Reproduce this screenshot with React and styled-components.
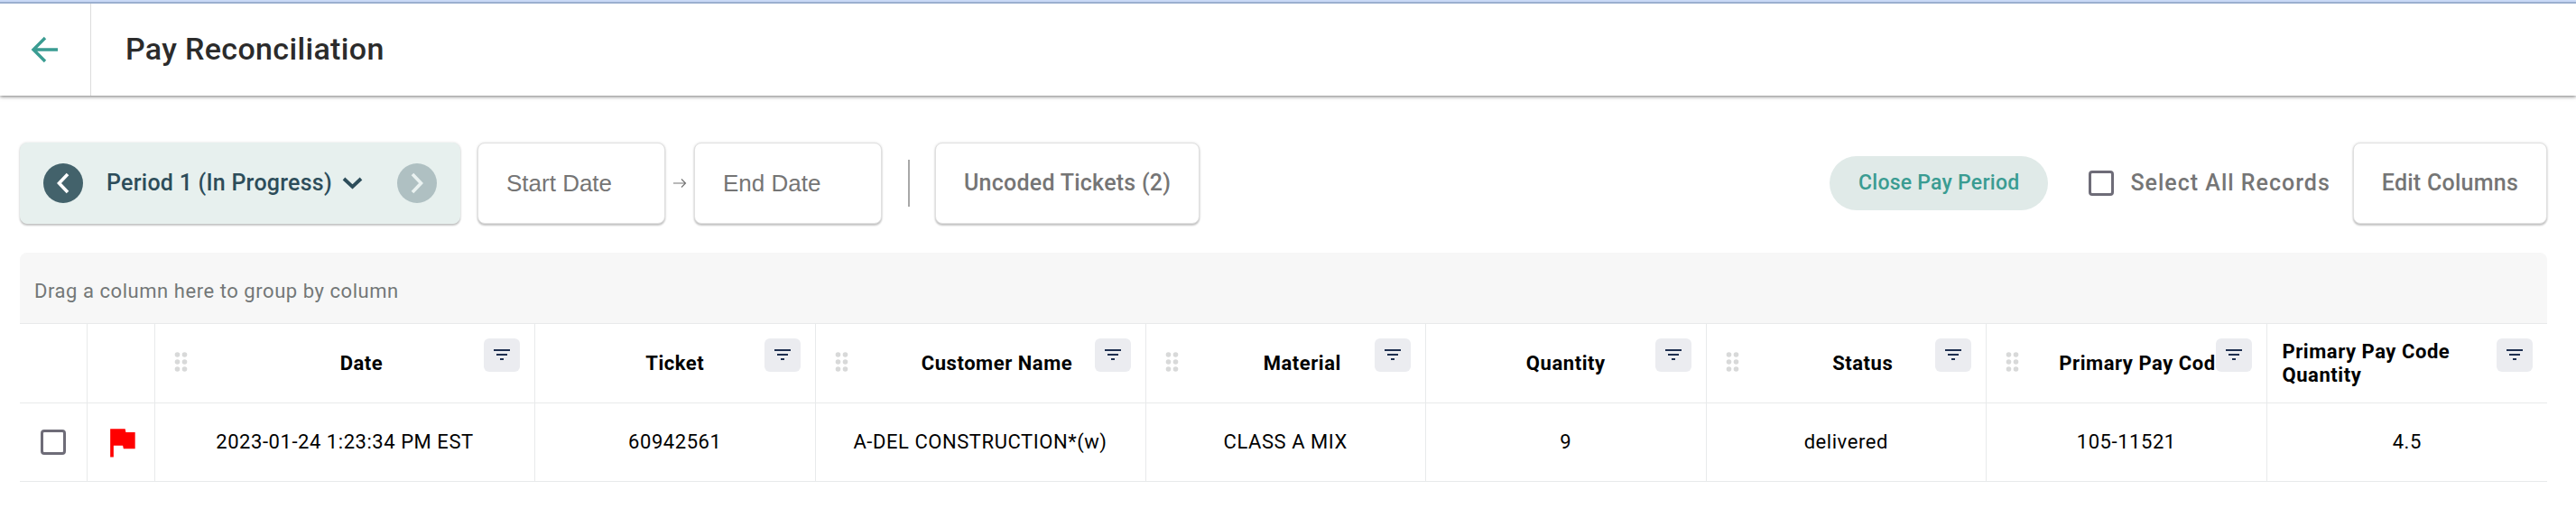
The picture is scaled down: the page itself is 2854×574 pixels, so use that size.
import React from "react";
import styled, { createGlobalStyle } from "styled-components";

const GlobalStyle = createGlobalStyle`
  *, *::before, *::after { box-sizing: border-box; }
  body { margin: 0; background: #fff; font-family: Roboto, "Liberation Sans", sans-serif; }
  button, input, select { font: inherit; letter-spacing: inherit; }
`;

const Header = styled.header`
  display: flex;
  align-items: stretch;
  height: 106px;
  border-top: 2px solid #c9d9f6;
  box-shadow: inset 0 2px 0 #9bafcf, 0 1px 4px rgba(0, 0, 0, 0.55);
`;

const BackButton = styled.button`
  display: flex;
  align-items: center;
  justify-content: center;
  width: 101px;
  margin-top: 2px;
  padding: 0 2px 0 0;
  border: 0;
  border-right: 1px solid #dcdcdc;
  background: transparent;
  color: #3a9c92;
  cursor: pointer;
`;

const Title = styled.h1`
  align-self: center;
  margin: 0 0 0 38px;
  color: #2b2b2b;
  font-size: 34px;
  line-height: 40px;
  font-weight: 500;
  letter-spacing: 0.01em;
`;

const Main = styled.main`
  padding: 52px 32px 40px 22px;
`;

const Toolbar = styled.div`
  display: flex;
  align-items: center;
  margin-bottom: 32px;
  font-size: 25px;
  line-height: 32px;
  letter-spacing: 0.01em;
`;

const raised = `
  height: 90px;
  border: 1px solid #e0e0e0;
  border-radius: 8px;
  box-shadow: 0 2px 2px rgba(0, 0, 0, 0.2), 0 0 3px rgba(0, 0, 0, 0.12);
`;

const PeriodPicker = styled.div`
  ${raised}
  display: flex;
  align-items: center;
  width: 488px;
  padding: 0 25px;
  border-color: #e7f0ee;
  background: #e7f0ee;
`;

const RoundButton = styled.button`
  display: flex;
  align-items: center;
  justify-content: center;
  width: 44px;
  height: 44px;
  padding: 0;
  border: 0;
  border-radius: 50%;
  background: #43626b;
  color: #fff;
  cursor: pointer;
  &:disabled { background: #afc0c2; color: #eaf2f1; cursor: default; }
`;

const PeriodField = styled.label`
  display: grid;
  align-items: center;
  margin: 0 auto 0 26px;
  color: #2d4d5a;
  svg { grid-area: 1 / 1; justify-self: end; pointer-events: none; }
`;

const PeriodSelect = styled.select`
  grid-area: 1 / 1;
  appearance: none;
  margin: 0;
  padding: 0 34px 0 0;
  border: 0;
  background: transparent;
  color: inherit;
  font-weight: 500;
`;

const DateInput = styled.input`
  ${raised}
  width: 208px;
  padding: 0 31px;
  background: #fff;
  color: #757575;
  font-family: "Liberation Sans", Arial, sans-serif;
  font-size: 26px;
  letter-spacing: normal;
  &::placeholder { color: #757575; opacity: 1; }
`;

const DateRange = styled.div`
  display: flex;
  align-items: center;
  gap: 8px;
  margin-left: 19px;
`;

const Divider = styled.span`
  width: 2px;
  height: 52px;
  margin: 0 28px 0 29px;
  background: #a8a8a8;
`;

const OutlineButton = styled.button`
  ${raised}
  padding: 0 31px;
  background: #fff;
  color: #757575;
  font-weight: 500;
  white-space: nowrap;
  cursor: pointer;
`;

const Actions = styled.div`
  display: flex;
  align-items: center;
  margin-left: auto;
`;

const PillButton = styled.button`
  height: 60px;
  padding: 0 32px;
  border: 0;
  border-radius: 30px;
  background: #e0eae8;
  color: #3a9c92;
  font-size: 23px;
  font-weight: 500;
  white-space: nowrap;
  cursor: pointer;
`;

const Checkbox = styled.input.attrs({ type: "checkbox" })`
  appearance: none;
  display: block;
  flex: none;
  width: 28px;
  height: 28px;
  margin: 0;
  border: 3px solid #6e6c78;
  border-radius: 4px;
  background: #fff;
  cursor: pointer;
  &:checked { background: #3a9c92; }
`;

const SelectAll = styled.label`
  display: flex;
  align-items: center;
  gap: 18px;
  margin: 0 25px 0 45px;
  color: #757575;
  font-weight: 500;
  letter-spacing: 0.04em;
  white-space: nowrap;
`;

const GroupPanel = styled.div`
  height: 78px;
  padding: 30px 16px 0;
  border-radius: 8px 8px 0 0;
  background: #f7f7f7;
  color: #737777;
  font-size: 22px;
  line-height: 26px;
  letter-spacing: 0.025em;
`;

const Grid = styled.table`
  width: 100%;
  table-layout: fixed;
  border-collapse: separate;
  border-spacing: 0;
  border-top: 1px solid #e8eaeb;
  color: #000;
  font-size: 22px;
  line-height: 26px;
  letter-spacing: 0.025em;
`;

const Col = styled.col`
  width: ${(p) => p.$width || "auto"};
`;

const HeadCell = styled.th`
  position: relative;
  height: 88px;
  padding: 0;
  border-bottom: 1px solid #e8eaeb;
  border-right: 1px solid #e8eaeb;
  font-weight: 700;
  &:last-child { border-right: 0; }
`;

const HeadContent = styled.div`
  display: flex;
  align-items: center;
  padding: ${(p) => (p.$draggable ? "0 0 0 21px" : "0 17px")};
`;

const HeadLabel = styled.span`
  margin: 0 auto;
  text-align: left;
  white-space: ${(p) => (p.$draggable ? "nowrap" : "normal")};
`;

const FilterButton = styled.button`
  position: absolute;
  top: 16px;
  right: 16px;
  display: flex;
  align-items: center;
  justify-content: center;
  width: 40px;
  height: 37px;
  padding: 0 0 2px;
  border: 0;
  border-radius: 6px;
  background: #ebecf0;
  color: #1e2f50;
  cursor: pointer;
`;

const BodyCell = styled.td`
  height: 87px;
  padding: 0 16px;
  border-bottom: 1px solid #e8eaeb;
  border-right: 1px solid #e8eaeb;
  text-align: center;
  &:last-child { border-right: 0; }
  > input, > svg { display: block; margin: 0 auto; }
`;

const BackArrow = () => (
  <svg width="30" height="30" viewBox="0 0 30 30" fill="none" stroke="currentColor" strokeWidth="3.4" aria-hidden="true">
    <path d="M30 15H3M16 2L3 15l13 13" />
  </svg>
);

const Chevron = ({ flip }) => (
  <svg width="24" height="24" viewBox="0 0 24 24" fill="none" stroke="currentColor" strokeWidth="3.6" aria-hidden="true">
    <path d={flip ? "M7 2l9.500 10L7 22" : "M17 2L7.500 12 17 22"} />
  </svg>
);

const ChevronDown = () => (
  <svg width="23" height="14" viewBox="0 0 23 14" fill="none" stroke="currentColor" strokeWidth="3.8" aria-hidden="true">
    <path d="M2 2l9.500 9L21 2" />
  </svg>
);

const RangeArrow = () => (
  <svg width="16" height="12" viewBox="0 0 16 12" fill="none" stroke="#757575" strokeWidth="1.200" aria-hidden="true">
    <path d="M1 6h14M10 1.500L14.500 6 10 10.500" />
  </svg>
);

const FilterIcon = () => (
  <svg width="18" height="12" viewBox="0 0 18 12" fill="currentColor" aria-hidden="true">
    <path d="M0 0h18v2H0zM3 5h12v2H3zM7 10h4v2H7z" />
  </svg>
);

const DragIcon = () => (
  <svg width="16" height="26" viewBox="0 0 16 26" fill="#d8d9d9" aria-hidden="true">
    {[3, 11, 19].map((y) => (
      <React.Fragment key={y}>
        <circle cx="3.500" cy={y} r="2.800" />
        <circle cx="11.500" cy={y} r="2.800" />
      </React.Fragment>
    ))}
  </svg>
);

const FlagIcon = () => (
  <svg width="44" height="44" viewBox="0 0 24 24" fill="#f00" role="img" aria-label="Flagged">
    <path d="M14.4 6L14 4H5v17h2v-7h5.600l.4 2h7V6z" />
  </svg>
);

const columns = [
  { label: "Date", value: "2023-01-24 1:23:34 PM EST", width: "421px", draggable: true },
  { label: "Ticket", value: "60942561" },
  { label: "Customer Name", value: "A-DEL CONSTRUCTION*(w)", width: "366px", draggable: true },
  { label: "Material", value: "CLASS A MIX", draggable: true },
  { label: "Quantity", value: "9" },
  { label: "Status", value: "delivered", draggable: true },
  { label: "Primary Pay Code", value: "105-11521", draggable: true },
  { label: "Primary Pay Code Quantity", value: "4.5" },
];

export default function App() {
  return (
    <>
      <GlobalStyle />
      <Header>
        <BackButton aria-label="Back"><BackArrow /></BackButton>
        <Title>Pay Reconciliation</Title>
      </Header>
      <Main>
        <Toolbar>
          <PeriodPicker>
            <RoundButton aria-label="Previous period"><Chevron /></RoundButton>
            <PeriodField>
              <PeriodSelect aria-label="Pay period">
                <option>Period 1 (In Progress)</option>
              </PeriodSelect>
              <ChevronDown />
            </PeriodField>
            <RoundButton aria-label="Next period" disabled><Chevron flip /></RoundButton>
          </PeriodPicker>
          <DateRange>
            <DateInput placeholder="Start Date" aria-label="Start Date" />
            <RangeArrow />
            <DateInput placeholder="End Date" aria-label="End Date" />
          </DateRange>
          <Divider />
          <OutlineButton>Uncoded Tickets (2)</OutlineButton>
          <Actions>
            <PillButton>Close Pay Period</PillButton>
            <SelectAll>
              <Checkbox />
              Select All Records
            </SelectAll>
            <OutlineButton>Edit Columns</OutlineButton>
          </Actions>
        </Toolbar>
        <GroupPanel>Drag a column here to group by column</GroupPanel>
        <Grid>
          <colgroup>
            <Col $width="75px" />
            <Col $width="75px" />
            {columns.map((c) => <Col key={c.label} $width={c.width} />)}
          </colgroup>
          <thead>
            <tr>
              <HeadCell as="td" />
              <HeadCell as="td" />
              {columns.map((c) => (
                <HeadCell key={c.label} scope="col">
                  <HeadContent $draggable={c.draggable}>
                    {c.draggable && <DragIcon />}
                    <HeadLabel $draggable={c.draggable}>{c.label}</HeadLabel>
                  </HeadContent>
                  <FilterButton aria-label={`Filter ${c.label}`}><FilterIcon /></FilterButton>
                </HeadCell>
              ))}
            </tr>
          </thead>
          <tbody>
            <tr>
              <BodyCell><Checkbox aria-label="Select ticket 60942561" /></BodyCell>
              <BodyCell><FlagIcon /></BodyCell>
              {columns.map((c) => <BodyCell key={c.label}>{c.value}</BodyCell>)}
            </tr>
          </tbody>
        </Grid>
      </Main>
    </>
  );
}
